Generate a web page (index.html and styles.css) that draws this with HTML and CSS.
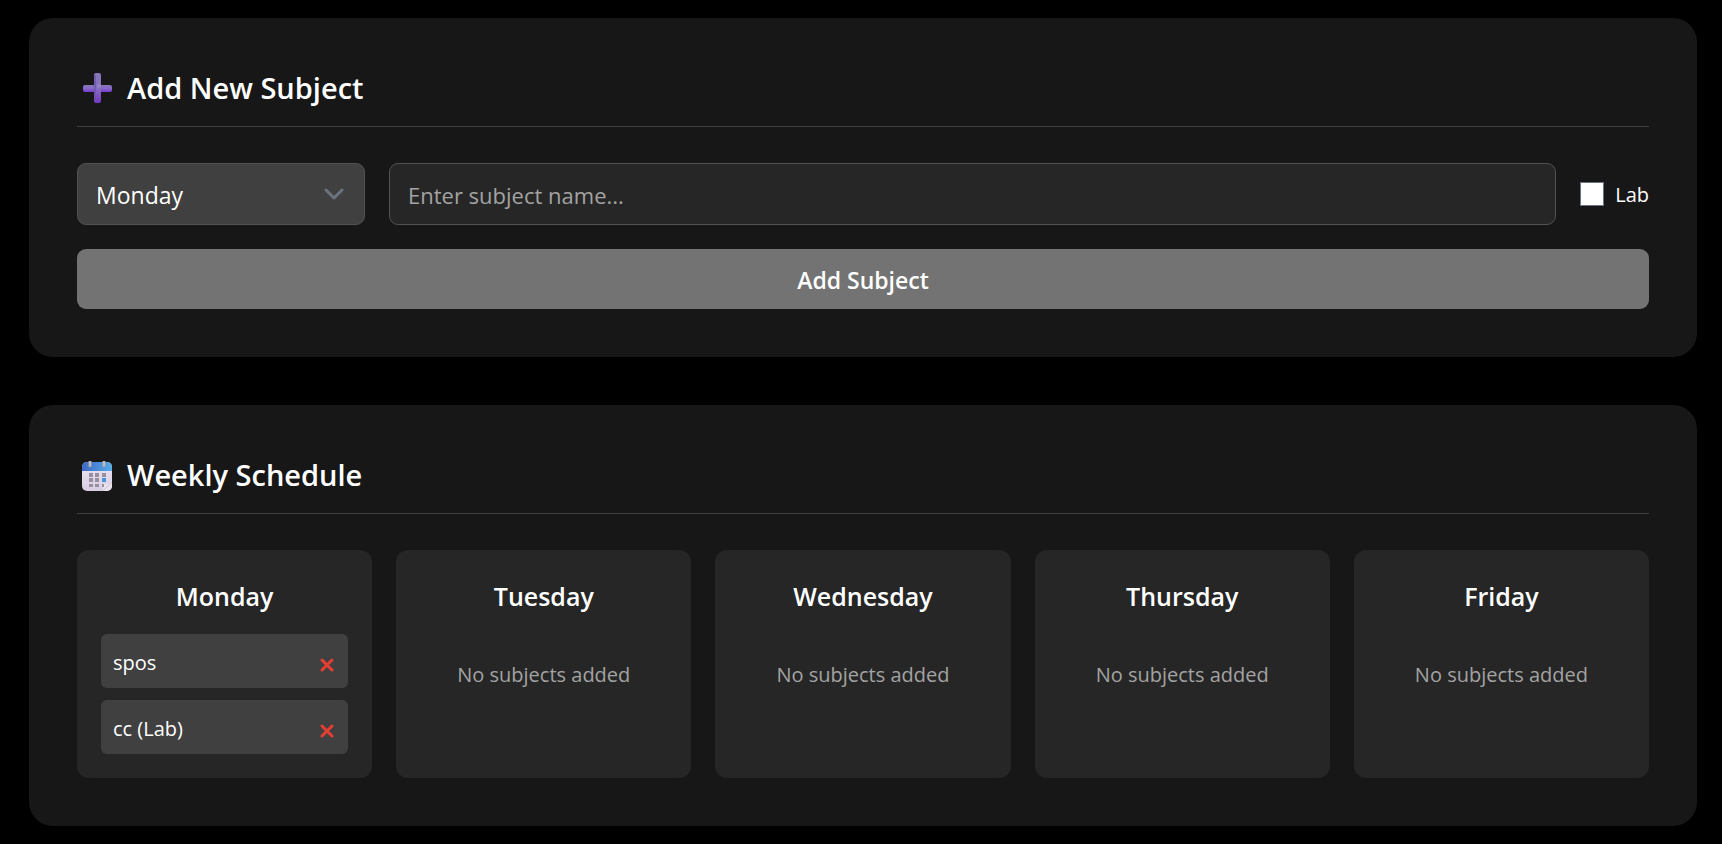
FILE: index.html
```html
<!DOCTYPE html>
<html lang="en">
<head>
<meta charset="utf-8">
<title>Class Schedule</title>
<link rel="stylesheet" href="styles.css">
</head>
<body>
<main class="page">
  <section class="card">
    <h2 class="card-title">
      <svg class="title-icon" viewBox="0 0 42 42" aria-hidden="true">
        <defs>
          <linearGradient id="plusV" x1="0" y1="0" x2="0" y2="1">
            <stop offset="0" stop-color="#8676b6"/><stop offset=".5" stop-color="#8470c0"/><stop offset="1" stop-color="#7438c4"/>
          </linearGradient>
          <linearGradient id="plusH" x1="0" y1="0" x2="0" y2="1">
            <stop offset="0" stop-color="#8878b8"/><stop offset=".5" stop-color="#8468c4"/><stop offset="1" stop-color="#7a38d8"/>
          </linearGradient>
        </defs>
        <rect x="6" y="18" width="29" height="7" rx="2" fill="url(#plusH)"/>
        <rect x="17" y="6" width="7" height="30" rx="2" fill="url(#plusV)"/>
        <path d="M18 8v26" stroke="#6650a4" stroke-width="2" opacity=".6"/>
        <circle cx="22" cy="19" r="2" fill="#a090d0" opacity=".6"/>
      </svg>
      Add New Subject
    </h2>
    <form class="subject-form">
      <div class="form-row">
        <div class="select-wrap">
          <select class="field day-select" aria-label="Day">
            <option>Monday</option>
            <option>Tuesday</option>
            <option>Wednesday</option>
            <option>Thursday</option>
            <option>Friday</option>
          </select>
          <svg class="chevron" viewBox="0 0 20 12" aria-hidden="true"><path d="M2 2l8 8 8-8"/></svg>
        </div>
        <input class="field name-input" type="text" placeholder="Enter subject name..." aria-label="Subject name">
        <label class="lab-label"><input class="lab-check" type="checkbox"><span class="lab-text">Lab</span></label>
      </div>
      <button class="add-button" type="button">Add Subject</button>
    </form>
  </section>

  <section class="card">
    <h2 class="card-title">
      <svg class="title-icon" viewBox="0 0 42 42" aria-hidden="true">
        <defs>
          <linearGradient id="calTop" x1="0" y1="0" x2="1" y2="0">
            <stop offset="0" stop-color="#3f68c4"/><stop offset="1" stop-color="#55aee8"/>
          </linearGradient>
          <linearGradient id="calBody" x1="0" y1="0" x2="0" y2="1">
            <stop offset="0" stop-color="#ece6f4"/><stop offset="1" stop-color="#d8cde2"/>
          </linearGradient>
        </defs>
        <rect x="5" y="8" width="30" height="29" rx="5" fill="url(#calBody)"/>
        <path d="M5 17v-4a5 5 0 0 1 5-5h20a5 5 0 0 1 5 5v4z" fill="url(#calTop)"/>
        <path d="M35 27v5a5 5 0 0 1-5 5h-4v-4c0-2 1-3 3-3 3 0 5-1 6-3z" fill="#e9e3f0"/>
        <path d="M26 37l9-9" stroke="#cbc0d4" stroke-width="1"/>
        <path d="M12 19h4v4h-4zM18 19h4v4h-4zM25 19h4v4h-4zM12 24h4v4h-4zM18 24h4v4h-4zM12 30h4v3h-4zM18 30h4v3h-4zM25 30h2v3h-2z" fill="#98909f"/>
        <path d="M25 24h4v4h-4z" fill="#4795dc"/>
        <path d="M13 7v6M27 7v6" stroke="#aaa6ae" stroke-width="3"/>
        <path d="M13 7v5M27 7v5" stroke="#d4d0d4" stroke-width="1"/>
      </svg>
      Weekly Schedule
    </h2>
    <div class="week">
      <article class="day">
        <h3 class="day-title">Monday</h3>
        <ul class="subjects">
          <li class="subject">spos
            <button class="remove" type="button" aria-label="Remove spos"><svg viewBox="0 0 20 26" aria-hidden="true"><path d="M6 10l10 10M16 10l-10 10"/></svg></button>
          </li>
          <li class="subject">cc (Lab)
            <button class="remove" type="button" aria-label="Remove cc (Lab)"><svg viewBox="0 0 20 26" aria-hidden="true"><path d="M6 10l10 10M16 10l-10 10"/></svg></button>
          </li>
        </ul>
      </article>
      <article class="day"><h3 class="day-title">Tuesday</h3><p class="empty">No subjects added</p></article>
      <article class="day"><h3 class="day-title">Wednesday</h3><p class="empty">No subjects added</p></article>
      <article class="day"><h3 class="day-title">Thursday</h3><p class="empty">No subjects added</p></article>
      <article class="day"><h3 class="day-title">Friday</h3><p class="empty">No subjects added</p></article>
    </div>
  </section>
</main>
</body>
</html>
```
FILE: styles.css
```css
* { box-sizing: border-box; }

body {
  margin: 0;
  background: #000;
  color: #fff;
  font-family: "Segoe UI", "Open Sans", "Noto Sans", sans-serif;
  font-size: 20px;
  line-height: 30px;
}

.page {
  display: flex;
  flex-direction: column;
  gap: 48px;
  padding: 18px 25px 18px 29px;
}

.card {
  padding: 48px;
  border-radius: 24px;
  background: #171717;
}

.card-title {
  display: flex;
  align-items: center;
  gap: 8px;
  margin: 0 0 36px;
  padding-bottom: 16px;
  border-bottom: 1px solid #404040;
  font-size: 29px;
  font-weight: 600;
  line-height: 44px;
}

.title-icon { width: 42px; height: 42px; }

.subject-form {
  display: flex;
  flex-direction: column;
  gap: 24px;
}

.form-row {
  display: flex;
  align-items: center;
  gap: 24px;
}

.select-wrap {
  position: relative;
  flex: 0 0 288px;
}

.field {
  width: 100%;
  height: 62px;
  padding: 2px 18px 0;
  border: 1px solid #525252;
  border-radius: 9px;
  color: #fff;
  font: inherit;
  font-size: 23px;
}

.day-select {
  appearance: none;
  background: #404040;
}

.chevron {
  position: absolute;
  top: 25px;
  right: 21px;
  width: 20px;
  height: 12px;
  fill: none;
  stroke: #6b7280;
  stroke-width: 3;
  stroke-linecap: round;
  stroke-linejoin: round;
  pointer-events: none;
}

.name-input {
  flex: 1;
  min-width: 0;
  background: #262626;
  font-size: 22px;
}

.name-input::placeholder { color: #a3a3a3; opacity: 1; }

.lab-label {
  display: flex;
  align-items: center;
  gap: 11px;
}

.lab-text { padding-top: 2px; }

.lab-check {
  appearance: none;
  width: 24px;
  height: 24px;
  margin: 0;
  border: 1px solid #6b7280;
  background: #fff;
}

.lab-check:checked { background: #737373; }

.add-button {
  height: 60px;
  padding: 2px 24px 0;
  border: 0;
  border-radius: 9px;
  background: #737373;
  color: #fff;
  font: inherit;
  font-size: 23px;
  font-weight: 600;
}

.week {
  display: grid;
  grid-template-columns: repeat(5, 1fr);
  gap: 24px;
}

.day {
  padding: 24px;
  border-radius: 12px;
  background: #262626;
}

.day-title {
  margin: 0 0 16px;
  font-size: 25px;
  font-weight: 600;
  line-height: 44px;
  text-align: center;
}

.subjects {
  display: grid;
  gap: 12px;
  margin: 0;
  padding: 0;
  list-style: none;
}

.subject {
  display: flex;
  align-items: center;
  justify-content: space-between;
  padding: 14px 12px 10px;
  border-radius: 6px;
  background: #404040;
}

.remove {
  width: 20px;
  height: 26px;
  padding: 0;
  border: 0;
  background: none;
}

.remove svg {
  display: block;
  width: 20px;
  height: 26px;
  fill: none;
  stroke: #e53e33;
  stroke-width: 3;
  stroke-linecap: round;
}

.empty {
  margin: 0;
  padding: 26px 0 24px;
  color: #a3a3a3;
  text-align: center;
}
```
